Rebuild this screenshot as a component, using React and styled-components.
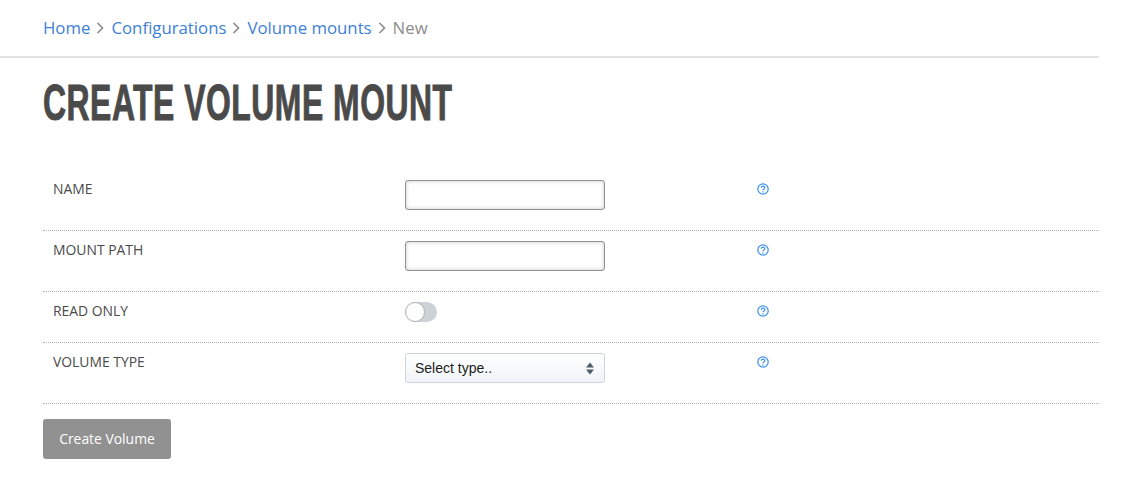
import React from "react";
import styled, { createGlobalStyle } from "styled-components";

const Global = createGlobalStyle`
  html, body { margin: 0; padding: 0; background: #fff; }
  body { font-family: "Open Sans", "Liberation Sans", sans-serif; color: #4a4a4a; }
`;

const Page = styled.div`
  width: 1099px;
  height: 499px;
  box-sizing: border-box;
`;

const Crumbs = styled.nav`
  display: flex;
  align-items: center;
  height: 54px;
  padding: 0 0 2px 43px;
  font-size: 16.8px;
  border-bottom: 2px solid #e1e1e1;
`;

const Crumb = styled.a`
  color: ${(p) => (p.$current ? "#8c8c8c" : "#3d7fd9")};
  text-decoration: none;
`;

const Chevron = styled.svg`
  width: 8px;
  height: 12px;
  margin: 2px 7px 0 6px;
  fill: none;
  stroke: #8a8a8a;
  stroke-width: 1.6;
`;

const Content = styled.main`
  padding: 0 0 0 43px;
`;

const Title = styled.h1`
  margin: 16px 0 38px;
  font-family: "Liberation Sans", sans-serif;
  font-weight: 700;
  font-size: 50px;
  line-height: 58px;
  letter-spacing: 0.8px;
  white-space: nowrap;
  color: #4a4a4a;
  text-transform: uppercase;
  transform: scaleX(0.638);
  transform-origin: left center;
  -webkit-text-stroke: 1px #4a4a4a;
`;

const Row = styled.div`
  display: grid;
  grid-template-columns: repeat(3, 352px);
  padding: 10px 0 20px;
  border-bottom: 1px dotted #b0b0b0;
`;

const Label = styled.label`
  padding: 0 10px;
  font-size: 13.9px;
  line-height: 18px;
  color: #4a4a4a;
  text-transform: uppercase;
`;

const Cell = styled.div`
  padding: 0 10px;
`;

const Input = styled.input`
  display: block;
  width: 200px;
  height: 30px;
  box-sizing: border-box;
  border: 1px solid #8f8f8f;
  border-radius: 3px;
  background: #fff;
  box-shadow: inset 0 0 4px rgba(0, 0, 0, 0.2);
  outline: none;
`;

const Toggle = styled.span`
  display: block;
  position: relative;
  width: 32px;
  height: 20px;
  border-radius: 10px;
  background: #ccd2d8;
`;

const Knob = styled.span`
  position: absolute;
  left: 0;
  top: 0;
  width: 20px;
  height: 20px;
  box-sizing: border-box;
  border-radius: 50%;
  background: #fff;
  border: 1px solid #b3b3b3;
`;

const SelectBox = styled.div`
  display: flex;
  align-items: center;
  justify-content: space-between;
  width: 200px;
  height: 30px;
  box-sizing: border-box;
  padding: 0 10px 0 9px;
  border: 1px solid #ced3d9;
  border-radius: 3px;
  background: linear-gradient(#ffffff, #f0f4f8);
  font-family: "Liberation Sans", Arial, sans-serif;
  font-size: 14px;
  color: #1c1c1c;
`;

const Arrows = styled.svg`
  width: 8px;
  height: 13px;
  fill: #4f5b66;
`;

const Help = styled.svg`
  display: block;
  width: 12px;
  height: 12px;
  margin-top: 3px;
  fill: none;
  stroke: #3b8ff0;
`;

const Button = styled.button`
  display: block;
  margin-top: 15px;
  width: 128px;
  height: 40px;
  padding: 0 0 2px;
  border: 0;
  border-radius: 3px;
  background: #919191;
  color: #fff;
  font-family: "Open Sans", sans-serif;
  font-size: 13.9px;
`;

const HelpIcon = () => (
  <Help viewBox="0 0 12 12">
    <circle cx="6" cy="6" r="5.2" strokeWidth="1.2" />
    <path d="M4.3 4.7c0-2.2 3.5-2.2 3.5-.1 0 1.3-1.8 1.3-1.8 2.6" strokeWidth="1.2" />
    <path d="M6 8.2v1.2" strokeWidth="1.2" />
  </Help>
);

const Sep = () => (
  <Chevron viewBox="0 0 8 12">
    <path d="M1.5 1l5 5-5 5" />
  </Chevron>
);

const rows = [
  { label: "Name", control: <Input /> },
  { label: "Mount path", control: <Input /> },
  { label: "Read only", control: <Toggle><Knob /></Toggle> },
  {
    label: "Volume type",
    control: (
      <SelectBox>
        Select type..
        <Arrows viewBox="0 0 8 13">
          <path d="M4 0.5l4 5H0zM4 12.5l-4-5h8z" />
        </Arrows>
      </SelectBox>
    ),
  },
];

export default function App() {
  return (
    <Page>
      <Global />
      <Crumbs>
        <Crumb href="#">Home</Crumb>
        <Sep />
        <Crumb href="#">Configurations</Crumb>
        <Sep />
        <Crumb href="#">Volume mounts</Crumb>
        <Sep />
        <Crumb $current>New</Crumb>
      </Crumbs>
      <Content>
        <Title>Create Volume Mount</Title>
        {rows.map((r) => (
          <Row key={r.label}>
            <Label>{r.label}</Label>
            <Cell>{r.control}</Cell>
            <Cell><HelpIcon /></Cell>
          </Row>
        ))}
        <Button>Create Volume</Button>
      </Content>
    </Page>
  );
}
